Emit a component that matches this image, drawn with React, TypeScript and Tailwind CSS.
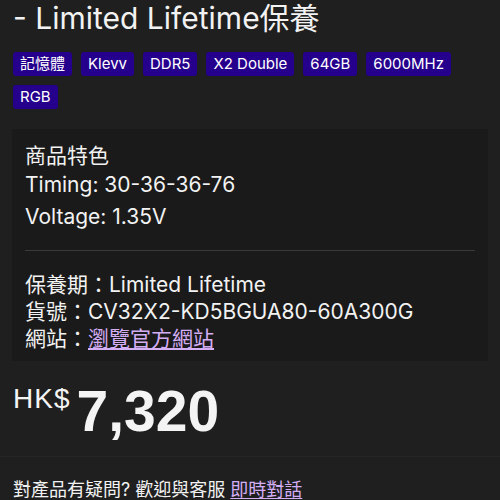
const tags = ['記憶體', 'Klevv', 'DDR5', 'X2 Double', '64GB', '6000MHz', 'RGB']

const sans = "font-['Inter','Noto_Sans_CJK_TC',sans-serif]"

export default function App() {
  return (
    <div className={`w-[500px] h-[500px] overflow-hidden bg-[#1f1f1f] text-[#f2f2f2] px-[13px] ${sans}`}>
      {/* 標題 */}
      <h1 className="text-[30px] leading-[36px] font-normal whitespace-nowrap">- Limited Lifetime保養</h1>

      {/* 標籤 */}
      <div className="mt-[16px] flex flex-wrap gap-x-[9px] gap-y-[9px] w-[450px]">
        {tags.map(t => (
          <span key={t} className="h-[24px] px-[7px] rounded-[3px] bg-[#25008c] text-white text-[15px] leading-[24px]">
            {t}
          </span>
        ))}
      </div>

      {/* 商品資料 */}
      <div className="mt-[20px] -mx-px h-[232px] bg-[#1a1a1a] px-[13px] pt-[12px] text-[21px]">
        <div className="leading-[29px]">商品特色</div>
        <div className="leading-[29px]">Timing: 30-36-36-76</div>
        <div className="leading-[29px] mt-[3px]">Voltage: 1.35V</div>
        <div className="mt-[19px] mb-[20px] h-px bg-[#3a3a3a]" />
        <div className="leading-[27px] whitespace-nowrap">保養期：Limited Lifetime</div>
        <div className="leading-[27px] whitespace-nowrap">貨號：CV32X2-KD5BGUA80-60A300G</div>
        <div className="leading-[27px] whitespace-nowrap">
          網站：<a className="text-[#d4aef5] underline underline-offset-2">瀏覽官方網站</a>
        </div>
      </div>

      {/* 價錢 */}
      <div className="mt-[22px] flex items-start font-['Liberation_Sans',Arial,sans-serif] text-[#f4f4f4]">
        <span className="mt-px text-[28px] leading-[30px] tracking-[1px]">HK$</span>
        <span className="text-[57px] leading-[56px] font-bold ml-[6px]">7,320</span>
      </div>

      <div className="mt-[17px] -mx-[13px] h-px bg-[#252525]" />

      <div className="mt-[20px] text-[18px] leading-[26px] whitespace-nowrap">
        對產品有疑問? 歡迎與客服 <a className="text-[#d4aef5] underline underline-offset-2">即時對話</a>
      </div>
    </div>
  )
}
